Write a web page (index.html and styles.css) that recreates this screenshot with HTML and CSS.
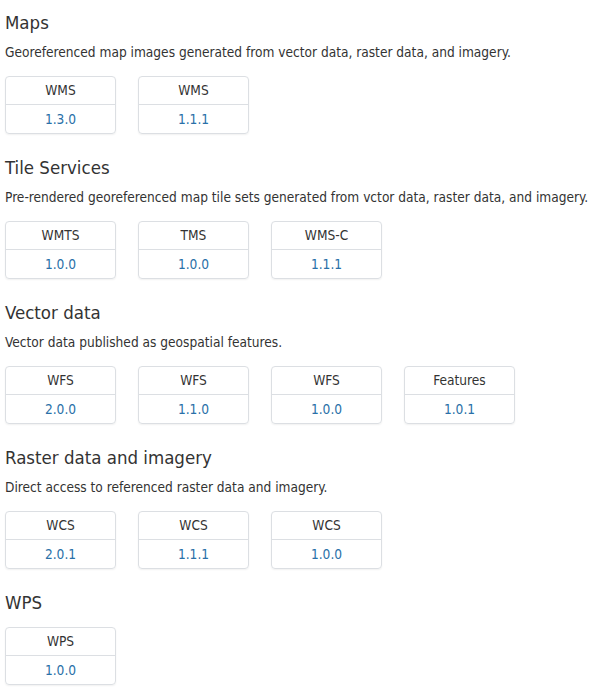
FILE: index.html
```html
<!DOCTYPE html>
<html lang="en">
<head>
<meta charset="utf-8">
<title>Services</title>
<link rel="stylesheet" href="styles.css">
</head>
<body>
<main class="page">
  <section class="group">
    <h2 class="group-title">Maps</h2>
    <p class="group-desc">Georeferenced map images generated from vector data, raster data, and imagery.</p>
    <div class="cards">
      <a class="card"><span class="card-name">WMS</span><span class="card-ver">1.3.0</span></a>
      <a class="card"><span class="card-name">WMS</span><span class="card-ver">1.1.1</span></a>
    </div>
  </section>
  <section class="group">
    <h2 class="group-title">Tile Services</h2>
    <p class="group-desc">Pre-rendered georeferenced map tile sets generated from vctor data, raster data, and imagery.</p>
    <div class="cards">
      <a class="card"><span class="card-name">WMTS</span><span class="card-ver">1.0.0</span></a>
      <a class="card"><span class="card-name">TMS</span><span class="card-ver">1.0.0</span></a>
      <a class="card"><span class="card-name">WMS-C</span><span class="card-ver">1.1.1</span></a>
    </div>
  </section>
  <section class="group">
    <h2 class="group-title">Vector data</h2>
    <p class="group-desc">Vector data published as geospatial features.</p>
    <div class="cards">
      <a class="card"><span class="card-name">WFS</span><span class="card-ver">2.0.0</span></a>
      <a class="card"><span class="card-name">WFS</span><span class="card-ver">1.1.0</span></a>
      <a class="card"><span class="card-name">WFS</span><span class="card-ver">1.0.0</span></a>
      <a class="card"><span class="card-name">Features</span><span class="card-ver">1.0.1</span></a>
    </div>
  </section>
  <section class="group">
    <h2 class="group-title">Raster data and imagery</h2>
    <p class="group-desc">Direct access to referenced raster data and imagery.</p>
    <div class="cards">
      <a class="card"><span class="card-name">WCS</span><span class="card-ver">2.0.1</span></a>
      <a class="card"><span class="card-name">WCS</span><span class="card-ver">1.1.1</span></a>
      <a class="card"><span class="card-name">WCS</span><span class="card-ver">1.0.0</span></a>
    </div>
  </section>
  <section class="group">
    <h2 class="group-title">WPS</h2>
    <div class="cards cards-nodesc">
      <a class="card"><span class="card-name">WPS</span><span class="card-ver">1.0.0</span></a>
    </div>
  </section>
</main>
</body>
</html>
```
FILE: styles.css
```css
html, body {
  margin: 0;
  padding: 0;
  background: #ffffff;
}
body {
  font-family: "DejaVu Sans Condensed", "DejaVu Sans", sans-serif;
  color: #333333;
  font-size: 13.6px;
}
.page {
  padding: 12px 5px 0 5px;
}
.group {
  margin-bottom: 23px;
}
.group-title {
  margin: 0;
  font-size: 18.5px;
  line-height: 22px;
  font-weight: normal;
  color: #333333;
}
.group-desc {
  margin: 9px 0 0 0;
  font-size: 13.6px;
  line-height: 19px;
  white-space: nowrap;
}
.cards {
  display: flex;
  gap: 22px;
  margin-top: 14px;
}
.cards-nodesc {
  margin-top: 13px;
}
.card {
  display: flex;
  flex-direction: column;
  width: 111px;
  box-sizing: border-box;
  border: 1px solid #dcdfe3;
  border-radius: 4px;
  box-shadow: 0 1px 2px rgba(0, 0, 0, 0.06);
  text-align: center;
  font-size: 13.6px;
  text-decoration: none;
}
.card-name {
  height: 27px;
  line-height: 27px;
  color: #333333;
  border-bottom: 1px solid #dcdfe3;
}
.card-ver {
  height: 28px;
  line-height: 28px;
  color: #2a70a8;
}
```
